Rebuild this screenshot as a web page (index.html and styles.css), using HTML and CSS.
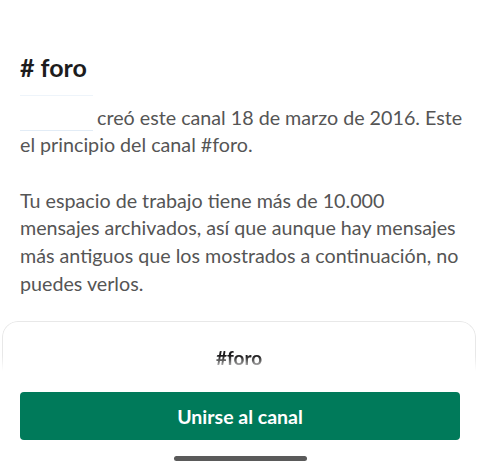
FILE: index.html
```html
<!DOCTYPE html>
<html lang="es">
<head>
<meta charset="utf-8">
<link rel="stylesheet" href="styles.css">
</head>
<body>
<main class="screen">
  <section class="intro">
    <h1 class="title"><span class="hash">#</span> foro</h1>
    <p class="para"><span class="mention"></span>creó este canal 18 de marzo de 2016. Este<br>el principio del canal #foro.</p>
    <p class="para">Tu espacio de trabajo tiene más de 10.000<br>mensajes archivados, así que aunque hay mensajes<br>más antiguos que los mostrados a continuación, no<br>puedes verlos.</p>
  </section>
  <section class="card">
    <div class="card-title">#foro</div>
  </section>
  <footer class="footer">
    <button class="join">Unirse al canal</button>
    <div class="home-indicator"></div>
  </footer>
</main>
</body>
</html>
```

FILE: styles.css
```css
html, body {
  margin: 0;
  padding: 0;
  background: #ffffff;
}

body {
  font-family: Lato, "Noto Sans", sans-serif;
  width: 480px;
  height: 474px;
  overflow: hidden;
}

.screen {
  display: flex;
  flex-direction: column;
}

.intro {
  padding: 52px 0 0 20px;
}

.title {
  margin: 0;
  font-size: 25px;
  line-height: 30px;
  font-weight: 700;
  color: #1d1c1d;
}

.hash {
  font-weight: 700;
}

.para {
  margin: 21.5px 0 0 0;
  font-size: 19.7px;
  line-height: 27.7px;
  color: #555555;
  white-space: nowrap;
}

.para + .para {
  margin-top: 27.7px;
}

.mention {
  display: inline-block;
  width: 73px;
  height: 34px;
  margin: -28px 4px -6px 0;
  border-top: 1px solid #eef4fa;
  border-bottom: 1px solid #e2ecf6;
  vertical-align: baseline;
}

.card {
  margin: 24px 4px 0 2px;
  height: 50px;
  border: 1px solid #e8e8e8;
  border-bottom: none;
  border-radius: 16px 16px 0 0;
  display: flex;
  justify-content: center;
  padding-top: 24px;
  box-sizing: border-box;
  -webkit-mask-image: linear-gradient(to bottom, #000 70%, transparent 100%);
  mask-image: linear-gradient(to bottom, #000 70%, transparent 100%);
}

.card-title {
  font-size: 19px;
  font-weight: 700;
  color: #1d1c1d;
  line-height: 24px;
}

.footer {
  padding: 21px 20px 0 20px;
  display: flex;
  flex-direction: column;
  align-items: center;
}

.join {
  width: 100%;
  height: 48px;
  border: none;
  border-radius: 4px;
  background: #007a5a;
  color: #ffffff;
  font-family: Lato, "Noto Sans", sans-serif;
  font-size: 19.5px;
  font-weight: 700;
  padding: 0;
}

.home-indicator {
  margin-top: 16px;
  width: 133px;
  height: 5px;
  border-radius: 3px;
  background: #5a5a5a;
}
```
